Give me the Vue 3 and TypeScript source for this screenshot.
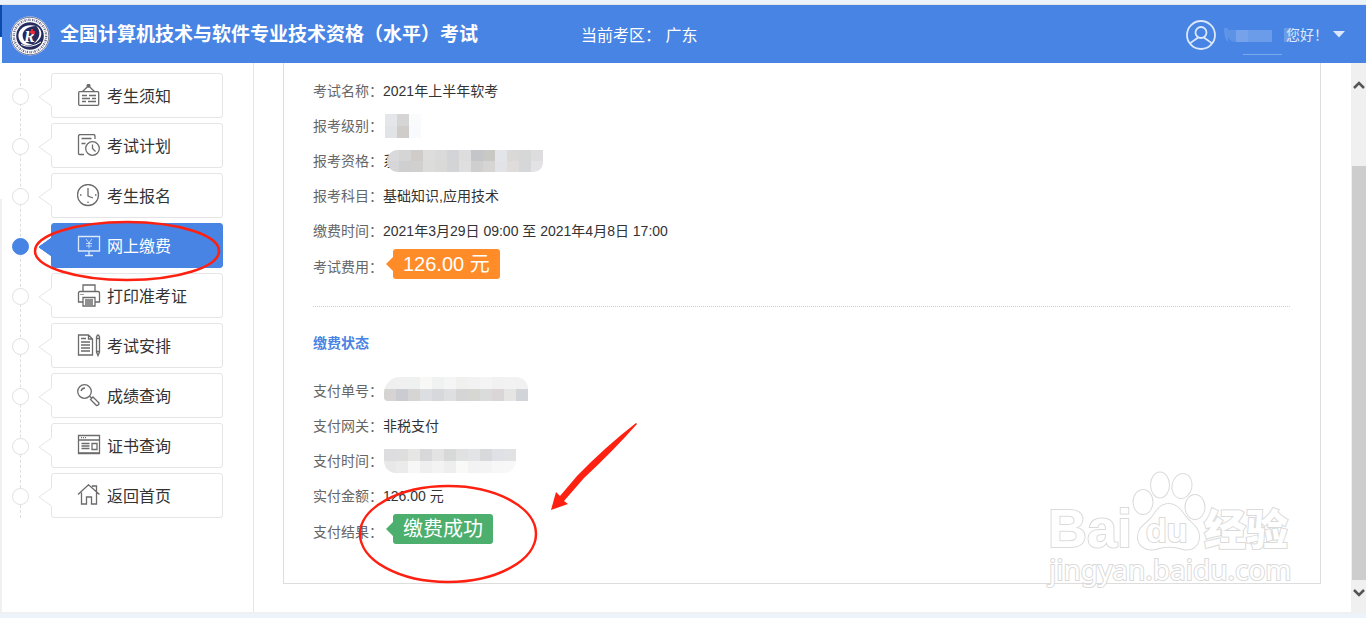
<script setup lang="ts">
interface MenuItem {
  id: string
  label: string
  active?: boolean
}

interface Row {
  label: string
  value?: string
  mask?: string[][]
  shape?: string
}

const menu: MenuItem[] = [
  { id: 'notice', label: '考生须知' },
  { id: 'plan', label: '考试计划' },
  { id: 'signup', label: '考生报名' },
  { id: 'pay', label: '网上缴费', active: true },
  { id: 'print', label: '打印准考证' },
  { id: 'arrange', label: '考试安排' },
  { id: 'score', label: '成绩查询' },
  { id: 'cert', label: '证书查询' },
  { id: 'home', label: '返回首页' },
]

const examRows: Row[] = [
  { label: '考试名称：', value: '2021年上半年软考' },
  {
    label: '报考级别：',
    shape: 'soft',
    mask: [
      ['#e5e6e9', '#d6d5d5', '#fafbfd'],
      ['#e2e3e6', '#cfccca', '#f9fafd'],
    ],
  },
  {
    label: '报考资格：',
    value: '系',
    shape: 'long',
    mask: [
      ['#d9d9db', '#d6d5d5', '#cfccca', '#dddddd', '#dadada', '#d3d4d7', '#dddddd', '#c3c5c8', '#c8c8c5', '#e3e5e9', '#dbd9d7', '#d5d8d6', '#dddde0'],
      ['#d6d6d8', '#d0cfcf', '#d2d0ce', '#dcdcda', '#d9d9d7', '#d3d4d6', '#dfdfdf', '#d0cfd0', '#d6d5d3', '#e1e3e6', '#dfdcdb', '#d6d7d9', '#e3e3e6'],
    ],
  },
  { label: '报考科目：', value: '基础知识,应用技术' },
  { label: '缴费时间：', value: '2021年3月29日 09:00 至 2021年4月8日 17:00' },
]

const payRows: Row[] = [
  {
    label: '支付单号：',
    shape: 'arch',
    mask: [
      ['#efefef', '#f0f0f0', '#eff1f0', '#f8f9f6', '#f0f1f1', '#f4f5f4', '#f0f0ef', '#f1f2f1', '#f4f4f4', '#f0f1f0', '#f2f2f2', '#f1f1f1'],
      ['#d5d4d3', '#cbccd1', '#d7d5d4', '#dcdee1', '#d7d8db', '#dedfe1', '#d5d5d6', '#d6d7d3', '#dadbdb', '#dad5d6', '#e5e5e3', '#d1d5da'],
    ],
  },
  { label: '支付网关：', value: '非税支付' },
  {
    label: '支付时间：',
    shape: 'time',
    mask: [
      ['#dddddf', '#dededf', '#e6e6e4', '#d8d8da', '#e3e3e3', '#d6d9d8', '#e1e1e2', '#e3e4e6', '#d8d9db', '#e0e1e7', '#e1e2e3'],
      ['#e8e8e9', '#ebebeb', '#f7f7f8', '#efeff0', '#f3f3f4', '#eeeeef', '#f9f9f8', '#f3f3f4', '#f4f4f5', '#f7f7f8', '#f8f8f9'],
    ],
  },
  { label: '实付金额：', value: '126.00 元' },
]
</script>

<template>
  <div class="page">
    <header class="top">
      <svg class="logo" viewBox="0 0 40 40" aria-hidden="true">
        <circle cx="20" cy="20" r="19.5" fill="#fff" />
        <circle cx="20" cy="20" r="18.8" fill="none" stroke="#4a4f78" stroke-width=".8" />
        <circle cx="20" cy="20" r="16.2" fill="none" stroke="#6a6e90" stroke-width="2.4" stroke-dasharray="1.3 .9 .6 1.1" />
        <circle cx="20" cy="20" r="13.8" fill="#262b5e" />
        <path d="M9 23C6 14 15 7 26 10C17 10 11 15 13 22C14.500 27 19 28.500 23 28C16 31 11 28 9 23Z" fill="#fff" />
        <path d="M26 9.500C34 14 33 24 23 28C31 22 31 15 26 9.500Z" fill="#fff" />
        <path d="M11 28.500Q21 33 31 26" fill="none" stroke="#fff" stroke-width="1" />
        <text x="14" y="26" class="logo-r">R</text>
        <path d="M19 15h2v-2h2v2h2v3h-2l-2 1v-2h-2Z" fill="#e22a3c" />
      </svg>
      <h1>全国计算机技术与软件专业技术资格（水平）考试</h1>
      <p class="area">当前考区： 广东</p>
      <button class="user" type="button">
        <svg class="avatar" viewBox="0 0 30 30" aria-hidden="true">
          <g fill="none" stroke="#dce8fb" stroke-width="1.800">
            <circle cx="15" cy="15" r="14" />
            <circle cx="15" cy="12.500" r="5.500" />
            <path d="M4 23.500C8 20 10 19.500 12 17.500M18 17.500C20 19.500 22 20 26 23.500" />
          </g>
        </svg>
        <svg class="name-mask" viewBox="0 0 70 44" aria-hidden="true">
          <path d="M0 15h4v14q-4-3-4-14Z" fill="#5f94e7" />
          <path d="M4 17h8v12q-6 0-8-5Z" fill="#5d93e6" />
          <rect x="12" y="17" width="12" height="12" fill="#75a2ea" />
          <rect x="24" y="17" width="24" height="12" fill="#6b9ce9" />
          <rect x="60" y="15" width="7" height="14" fill="#6c9be8" />
          <path d="M19 41.500h39" stroke="#7ba7ed" />
        </svg>
        <span>您好！</span>
        <svg class="caret" viewBox="0 0 12 7" aria-hidden="true"><path d="M0 0h12L6 6.500Z" fill="#dce8fb" /></svg>
      </button>
    </header>

    <div class="body">
      <nav class="side">
        <ol>
          <li v-for="item in menu" :key="item.id" :class="{ active: item.active }">
            <i class="dot"></i>
            <a href="#">
              <svg class="beak" viewBox="0 0 14 20" aria-hidden="true">
                <path class="beak-fill" d="M14 1L1 10L14 19Z" />
                <path class="beak-line" d="M13.500 1L1 10L13.500 19" />
              </svg>
              <svg class="icon" viewBox="0 0 24 24" aria-hidden="true">
                <g v-if="item.id === 'notice'">
                  <rect x="1.700" y="7.700" width="20" height="13.600" rx="1" />
                  <circle cx="11.500" cy="1.800" r="1.400" fill="#666" />
                  <path d="M10.500 2.800L5.500 7.500M12.500 2.800L17.500 7.500M5 11.500h5M12 11.500h7M5 14.500h8M15 14.500h4M5 17.500h4M11 17.500h8" />
                </g>
                <g v-else-if="item.id === 'plan'">
                  <path d="M7 20.500H2.500q-1 0-1-1V2.500q0-2 2-2h13q1.500 0 1.500 2V5M4.500 4.500h10M4.500 9.500h4" />
                  <circle cx="15.500" cy="14.500" r="6.800" />
                  <path d="M15.500 10.500v4l3 3" />
                </g>
                <g v-else-if="item.id === 'signup'">
                  <circle cx="11" cy="11" r="10.500" />
                  <path d="M11 4v8l5 2M3 11h1.500M18 11h1.500M11 17.500V19" />
                </g>
                <g v-else-if="item.id === 'pay'">
                  <path d="M1.500 2.500h21v14.500h-21ZM12 17v4.500M8 21.500h8" />
                  <path d="M9 5l3 4l3-4M12 9v5.500M9 9.500h6M9 12h6" stroke-width=".8" />
                </g>
                <g v-else-if="item.id === 'print'">
                  <path d="M6 7.500V1h12v6.500M6 18H1.500V9q0-1.500 1.500-1.500h18q1.500 0 1.500 1.500v9H18M6 13.500h12v8.500H6ZM8 16h8M8 18h8M8 20h8M4 10v1M6 10v1" />
                </g>
                <g v-else-if="item.id === 'arrange'">
                  <path d="M1.500 1h10l4 4v16h-14ZM11.500 1v4h4M4 4.500h5M4 8h9M4 11h9M4 14h9M4 17h9" />
                  <path d="M19.500 3q1.500-4 3 0v15L21 21.500L19.500 18ZM19.500 4.500h3M19.500 17.500h3" />
                </g>
                <g v-else-if="item.id === 'score'">
                  <circle cx="7.500" cy="7.500" r="6.800" />
                  <path d="M4 7q1-3 4-3M12.500 12l2 2M16 13l6 6q0 2.500-2.500 2.500l-6-6Z" />
                </g>
                <g v-else-if="item.id === 'cert'">
                  <path d="M1.500 1.500h21v18h-21ZM1.500 6h21M4 3.700h1M6 3.700h1M8 3.700h1M4.500 9.500h8M4.500 12h8M4.500 14.500h8M15 9.500h5v6h-5Z" />
                  <path d="M1.500 19h21" stroke-width="1.500" />
                </g>
                <g v-else>
                  <path d="M1 10.500L11.500 .8L22.500 10.500M4.500 8.500V20h5v-7h5v7h5V8.500M15.500 3V2h4v5.500" />
                </g>
              </svg>
              <span>{{ item.label }}</span>
            </a>
            <svg v-if="item.active" class="ring-menu" viewBox="0 0 190 64" aria-hidden="true">
              <ellipse cx="95" cy="32" rx="92" ry="29" fill="none" stroke="#fe2010" stroke-width="2.500" />
            </svg>
          </li>
        </ol>
      </nav>

      <main>
        <section class="card">
          <dl>
            <div v-for="row in examRows" :key="row.label" class="row">
              <dt>{{ row.label }}</dt>
              <dd>
                <span v-if="row.value">{{ row.value }}</span>
                <span v-if="row.mask" class="mask" :class="row.shape">
                  <span v-for="(line, n) in row.mask" :key="n" class="mask-line">
                    <i v-for="(tone, c) in line" :key="c" :style="{ background: tone }"></i>
                  </span>
                </span>
              </dd>
            </div>
            <div class="row big">
              <dt>考试费用：</dt>
              <dd><strong class="tag orange">126.00 元</strong></dd>
            </div>
          </dl>
          <hr />
          <h2>缴费状态</h2>
          <dl>
            <div v-for="row in payRows" :key="row.label" class="row">
              <dt>{{ row.label }}</dt>
              <dd>
                <span v-if="row.value">{{ row.value }}</span>
                <span v-if="row.mask" class="mask" :class="row.shape">
                  <span v-for="(line, n) in row.mask" :key="n" class="mask-line">
                    <i v-for="(tone, c) in line" :key="c" :style="{ background: tone }"></i>
                  </span>
                </span>
              </dd>
            </div>
            <div class="row big">
              <dt>支付结果：</dt>
              <dd><strong class="tag green">缴费成功</strong></dd>
              <svg class="marks" viewBox="0 0 300 170" aria-hidden="true">
                <ellipse cx="95" cy="115" rx="88" ry="48" fill="none" stroke="#fe2010" stroke-width="2.500" />
                <path d="M198 91L203 73L207 77L224 57Q252 28 283 4L284 5Q260 32 231 59L211 82L215 85Z" fill="#fe2010" />
              </svg>
            </div>
          </dl>
        </section>
      </main>

      <div class="scroll">
        <button type="button" class="up" aria-label="向上滚动">
          <svg viewBox="0 0 12 8"><path d="M1 7L6 2L11 7" /></svg>
        </button>
        <div class="thumb"></div>
        <button type="button" class="down" aria-label="向下滚动">
          <svg viewBox="0 0 12 8"><path d="M1 1L6 6L11 1" /></svg>
        </button>
      </div>

      <svg class="watermark" viewBox="0 0 260 125">
        <g class="wm">
          <text x="6" y="82" class="wm-bai">Bai</text>
          <ellipse cx="101" cy="37" rx="9.500" ry="12" />
          <ellipse cx="118" cy="20" rx="9" ry="12.500" />
          <ellipse cx="140" cy="21" rx="9.500" ry="12" transform="rotate(12 140 21)" />
          <ellipse cx="153" cy="42" rx="9.500" ry="12" />
          <path d="M127 39C134 39 139 45 143 51C148 58 158 62 157 73C156 82 149 86 141 84C131 81 123 81 114 84C104 86 96 81 96 72C96 62 105 59 111 51C115 45 119 39 127 39Z" />
          <text x="104" y="77" class="wm-du">du</text>
          <text x="162" y="80" class="wm-jy">经验</text>
          <text x="7" y="115" class="wm-url">jingyan.baidu.com</text>
        </g>
      </svg>
    </div>
  </div>
</template>

<style>
body {
  margin: 0;
  background: #edf3fa;
}
</style>

<style scoped>
* {
  box-sizing: border-box;
}
.page {
  position: relative;
  min-height: 100vh;
  display: flex;
  flex-direction: column;
  padding: 5px 0 6px 2px;
  background: linear-gradient(#edf3fa 4px, #e4e4e4 4px, #e4e4e4 5px, #0b4aa8 5px, #0b4aa8 37px, #fff 37px, #fff 199px, #f0f0f0 199px);
  font-family: "Liberation Sans", "Noto Sans CJK SC", sans-serif;
  color: #333;
}
.page::after {
  content: "";
  position: absolute;
  left: 0;
  right: 0;
  bottom: 0;
  height: 5px;
  background: #edf3fa;
}
.top {
  height: 58px;
  display: flex;
  align-items: center;
  padding: 0 21px 0 8px;
  background: #4884e3;
  color: #fff;
}
.logo {
  width: 40px;
  height: 40px;
  margin-top: 4px;
}
.logo-r {
  font: italic bold 16px "Liberation Serif", serif;
  fill: #fff;
}
h1 {
  margin: 2px 0 0 10px;
  font-size: 19px;
  line-height: 28px;
  font-weight: 700;
}
.area {
  margin: 4px 0 0 103px;
  font-size: 16px;
  line-height: 24px;
}
.user {
  display: flex;
  align-items: center;
  height: 58px;
  margin-left: auto;
  padding: 0;
  border: 0;
  background: none;
  font: inherit;
  font-size: 14px;
  color: #dce8fb;
}
.avatar {
  width: 30px;
  height: 30px;
  margin-top: 2px;
}
.name-mask {
  width: 70px;
  height: 44px;
  margin: 2px -8px 0 8px;
}
.caret {
  width: 12px;
  height: 7px;
  margin-left: 5px;
}
.body {
  position: relative;
  flex: 1;
  display: flex;
  background: #fff;
  border-bottom: 1px solid #f0f0f0;
}
.side {
  width: 252px;
  padding: 10px 30px 0 10px;
  border-right: 1px solid #e6e6e6;
}
ol {
  position: relative;
  display: flex;
  flex-direction: column;
  gap: 5px;
  margin: 0;
  padding: 0;
  list-style: none;
}
ol::before {
  content: "";
  position: absolute;
  left: 8px;
  top: 0;
  bottom: 0;
  border-left: 1px dashed #ddd;
}
li {
  position: relative;
  display: flex;
  align-items: center;
}
.dot {
  position: relative;
  width: 17px;
  height: 17px;
  margin-top: 2px;
  border: 1px solid #e0e0e0;
  border-radius: 50%;
  background: #fff;
}
li a {
  position: relative;
  flex: 1;
  display: flex;
  align-items: center;
  gap: 6px;
  height: 45px;
  margin-left: 22px;
  padding-left: 25px;
  border: 1px solid #e5e5e5;
  border-radius: 3px;
  background: #fff;
  color: #333;
  font-size: 16px;
  line-height: 24px;
  text-decoration: none;
}
li a span {
  margin-top: 3px;
}
.beak {
  position: absolute;
  left: -14px;
  top: 13px;
  width: 14px;
  height: 20px;
}
.beak-fill {
  fill: #fff;
  stroke: #fff;
}
.beak-line {
  fill: none;
  stroke: #e5e5e5;
}
.icon {
  width: 24px;
  height: 24px;
  fill: none;
  stroke: #6b6b6b;
  stroke-width: 1.3;
}
.active .dot {
  background: #4884e3;
  border-color: #4884e3;
}
.active a {
  background: #4884e3;
  border-color: #4884e3;
  color: #fff;
}
.active .icon {
  stroke: #dce8fb;
}
.active .beak-fill,
.active .beak-line {
  fill: #4884e3;
  stroke: #4884e3;
}
.ring-menu {
  position: absolute;
  left: 20px;
  top: -4px;
  width: 190px;
  height: 64px;
  pointer-events: none;
  z-index: 2;
}
main {
  flex: 1;
  padding: 0 30px 28px 29px;
}
.card {
  padding: 10px 30px 33px 29px;
  border: 1px solid #ddd;
  border-top: 0;
}
dl {
  margin: 0;
}
.row {
  position: relative;
  display: flex;
  align-items: center;
  height: 35px;
  font-size: 14px;
  line-height: 20px;
}
.row.big {
  height: 37px;
}
dt {
  width: 70px;
  color: #666;
  white-space: nowrap;
}
dd {
  display: flex;
  align-items: center;
  margin: 0;
}
.mask {
  position: relative;
  display: flex;
  flex-direction: column;
  overflow: hidden;
}
.mask-line {
  display: flex;
}
.mask-line i {
  width: 12px;
  height: 12px;
}
.soft {
  margin-left: 2px;
}
.long {
  margin-left: -10px;
  border-radius: 12px 0 10px 12px;
}
.long i {
  height: 11px;
}
.arch {
  border-radius: 16px 12px 0 4px;
  margin: -4px 0 0 1px;
}
.time {
  margin-left: 1px;
  border-radius: 0 0 12px 12px;
}
.tag {
  position: relative;
  margin: -5px 0 0 10px;
  padding: 1px 10px 0;
  border-radius: 3px;
  font-size: 20px;
  line-height: 29px;
  font-weight: 400;
  color: #fff;
}
.tag::before {
  content: "";
  position: absolute;
  left: -7px;
  top: 8px;
  border: 7px solid transparent;
  border-left: 0;
}
.orange {
  background: #ff8c28;
}
.orange::before {
  border-right-color: #ff8c28;
}
.green {
  background: #4caf6e;
}
.green::before {
  border-right-color: #4caf6e;
}
hr {
  height: 0;
  margin: 21px 0 24px;
  border: 0;
  border-top: 1px dotted #ccc;
}
h2 {
  margin: 0 0 18px;
  font-size: 14px;
  line-height: 24px;
  color: #4884e3;
}
.marks {
  position: absolute;
  left: 40px;
  top: -94px;
  width: 300px;
  height: 170px;
  pointer-events: none;
}
.scroll {
  display: flex;
  flex-direction: column;
  width: 15px;
  background: #f0f0f0;
}
.scroll button {
  display: flex;
  align-items: center;
  justify-content: center;
  height: 32px;
  padding: 0 0 6px;
  border: 0;
  background: none;
}
.scroll .up {
  height: 43px;
  margin-bottom: 60px;
  padding: 0;
}
.scroll svg {
  width: 12px;
  height: 8px;
  fill: none;
  stroke: #555;
  stroke-width: 2.5;
}
.thumb {
  flex: 1;
  margin-left: 1px;
  background: #cdcdcd;
}
.watermark {
  position: absolute;
  right: 64px;
  bottom: 22px;
  width: 260px;
  height: 125px;
  pointer-events: none;
}
.wm {
  fill: #fff;
  stroke: #dadada;
  stroke-width: 2;
  paint-order: stroke;
}
.wm-bai {
  font: bold 54px "Liberation Sans", sans-serif;
}
.wm-du {
  font: bold 34px "Liberation Sans", sans-serif;
}
.wm-jy {
  font: 900 42px "Noto Sans CJK SC", sans-serif;
}
.wm-url {
  font: 28px "Noto Sans", sans-serif;
}
</style>
